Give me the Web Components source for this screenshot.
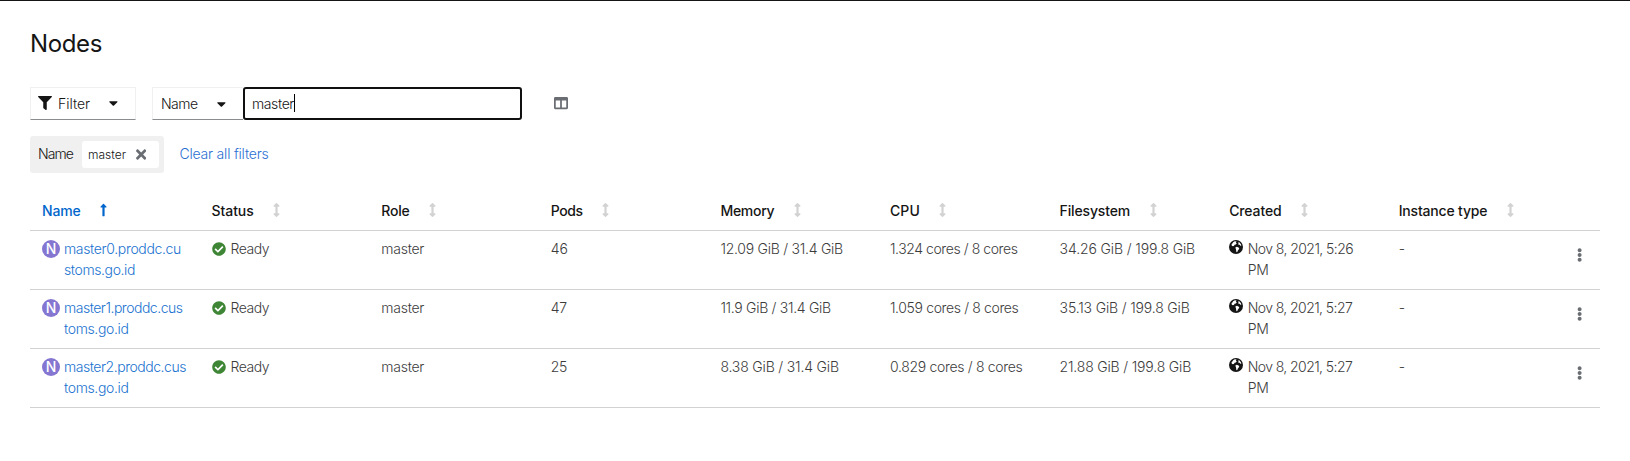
<!DOCTYPE html>
<html lang="en">
<head>
<meta charset="utf-8">
<title>Nodes</title>
<style>
body{margin:0;background:#fff;font:300 14px/21px Inter,"Liberation Sans",sans-serif;color:#151515}
</style>
</head>
<body>
<nodes-page></nodes-page>
<script>
const ICONS={
filter:[512,'M487.976 0H24.028C2.71 0-8.047 25.866 7.058 40.971L192 225.941V432c0 7.831 3.821 15.17 10.237 19.662l80 55.98C298.02 518.69 320 507.493 320 487.98V225.941l184.947-184.97C520.021 25.896 509.338 0 487.976 0z'],
caret:[320,'M31.3 192h257.3c17.8 0 26.7 21.5 14.1 34.1L174.1 354.8c-7.8 7.8-20.5 7.8-28.3 0L17.2 226.1C4.6 213.5 13.5 192 31.3 192z'],
times:[352,'M242.72 256l100.07-100.07c12.28-12.28 12.28-32.19 0-44.48l-22.24-22.24c-12.28-12.28-32.19-12.28-44.48 0L176 189.28 75.93 89.21c-12.28-12.28-32.19-12.28-44.48 0L9.21 111.45c-12.28 12.28-12.28 32.19 0 44.48L109.28 256 9.21 356.07c-12.28 12.28-12.28 32.19 0 44.48l22.24 22.24c12.28 12.28 32.2 12.28 44.48 0L176 322.72l100.07 100.07c12.28 12.28 32.2 12.28 44.48 0l22.24-22.24c12.28-12.28 12.28-32.19 0-44.48L242.72 256z'],
check:[512,'M504 256c0 136.967-111.033 248-248 248S8 392.967 8 256 119.033 8 256 8s248 111.033 248 248zM227.314 387.314l184-184c6.248-6.248 6.248-16.379 0-22.627l-22.627-22.627c-6.248-6.249-16.379-6.249-22.628 0L216 308.118l-70.059-70.059c-6.248-6.248-16.379-6.248-22.628 0l-22.627 22.627c-6.248 6.248-6.248 16.379 0 22.627l104 104c6.249 6.249 16.379 6.249 22.628.001z'],
up:[256,'M88 166.059V468c0 6.627 5.373 12 12 12h56c6.627 0 12-5.373 12-12V166.059h46.059c21.382 0 32.09-25.851 16.971-40.971l-86.059-86.059c-9.373-9.373-24.569-9.373-33.941 0l-86.059 86.059c-15.119 15.119-4.411 40.971 16.971 40.971H88z'],
sort:[256,'M214.059 377.941H168V134.059h46.059c21.382 0 32.09-25.851 16.971-40.971L144.971 7.029c-9.373-9.373-24.568-9.373-33.941 0L24.971 93.088c-15.119 15.119-4.411 40.971 16.971 40.971H88v243.882H41.941c-21.382 0-32.09 25.851-16.971 40.971l86.059 86.059c9.373 9.373 24.568 9.373 33.941 0l86.059-86.059c15.12-15.119 4.412-40.971-16.97-40.971z'],
columns:[512,'M464 32H48C21.49 32 0 53.49 0 80v352c0 26.51 21.49 48 48 48h416c26.51 0 48-21.49 48-48V80c0-26.51-21.49-48-48-48zM224 416H64V160h160v256zm224 0H288V160h160v256z'],
kebab:[192,'M96 184c39.8 0 72 32.2 72 72s-32.2 72-72 72-72-32.2-72-72 32.2-72 72-72zM24 80c0 39.8 32.2 72 72 72s72-32.2 72-72S135.800 8 96 8 24 40.200 24 80zm0 352c0 39.800 32.200 72 72 72s72-32.200 72-72-32.200-72-72-72-72 32.200-72 72z'],
globe:[512,'M256 0a256 256 0 1 0 0 512a256 256 0 1 0 0-512zM150 82l64-34 62 6-26 44 34 22-34 40-46 16-20 36-38 18-44-22-8-60 30-24zM340 66l54 38 46 62 8 52-40-14-22-34-36 6-18-36 24-24zM232 272l56-22 58 20 30 36-26 46-28 34-18 54-32 8-10-62-8-52z']
};
class UiIcon extends HTMLElement{
  connectedCallback(){
    const [w,d]=ICONS[this.getAttribute('name')];
    this.attachShadow({mode:'open'}).innerHTML=`<style>:host{display:block;flex:none}svg{display:block;height:var(--icon-size,14px);width:auto;fill:currentColor}</style><svg viewBox="0 0 ${w} 512"><path fill-rule="evenodd" d="${d}"/></svg>`;
  }
}
customElements.define('ui-icon',UiIcon);

/* A run of text whose tracking is adjusted so that it spans the width given in "w". */
class UiText extends HTMLElement{
  connectedCallback(){
    this.attachShadow({mode:'open'}).innerHTML='<style>:host{display:block;white-space:nowrap;width:max-content;flex:none}</style><slot></slot>';
    const w=+this.getAttribute('w'), n=this.textContent.length;
    if(!w||!n)return;
    const spacing=(w-this.getBoundingClientRect().width)/n;
    this.style.letterSpacing=spacing.toFixed(3)+'px';
  }
}
customElements.define('ui-text',UiText);

class FilterToggle extends HTMLElement{
  constructor(){super();this.attachShadow({mode:'open'}).innerHTML=`<style>
:host{display:flex;align-items:center;box-sizing:border-box;height:33px;padding:0 17px 1px 7px;border:1px solid #f0f0f0;border-bottom-color:#8a8d90;justify-content:space-between}
:host([attached]){border-right:0;padding-left:8px}
:host([attached])>ui-icon{margin-top:2px}
.l{display:flex;align-items:center;gap:6px}
</style><div class="l"><slot></slot></div><ui-icon name="caret"></ui-icon>`}
}
customElements.define('filter-toggle',FilterToggle);

class SearchInput extends HTMLElement{
  constructor(){super();this.attachShadow({mode:'open'}).innerHTML=`<style>
:host{display:flex;align-items:center;box-sizing:border-box;width:279px;height:33px;padding:0 0 1px 7px;border:2px solid #101010;border-radius:3px}
.caret{width:1px;height:18px;background:#000}
</style><slot></slot><span class="caret"></span>`}
}
customElements.define('search-input',SearchInput);

class ChipGroup extends HTMLElement{
  constructor(){super();this.attachShadow({mode:'open'}).innerHTML=`<style>
:host{display:flex;align-items:center;box-sizing:border-box;width:134px;height:37px;padding:0 5px 0 8px;background:#f0f0f0;border-radius:3px;justify-content:space-between}
::slotted([slot=category]){margin-top:-2px}
.chip{display:flex;align-items:center;justify-content:space-between;box-sizing:border-box;width:77px;height:27px;padding:0 13px 0 6px;background:#fff;border-radius:3px;font-size:12px}
ui-icon{color:#6a6e73;--icon-size:15px;margin-top:-1px}
</style><slot name="category"></slot><div class="chip"><slot></slot><ui-icon name="times"></ui-icon></div>`}
}
customElements.define('chip-group',ChipGroup);

class ColumnHead extends HTMLElement{
  connectedCallback(){
    const s=this.hasAttribute('sorted');
    this.attachShadow({mode:'open'}).innerHTML=`<style>
:host{display:flex;align-items:center;gap:19.5px;padding-left:12px;font-weight:500;color:${s?'#06c':'#151515'}}
ui-icon{color:${s?'#06c':'#d2d2d2'};margin-top:-1px}
</style><slot></slot><ui-icon name="${s?'up':'sort'}"></ui-icon>`;
  }
}
customElements.define('column-head',ColumnHead);

const GRID='display:grid;grid-template-columns:repeat(9,169.6px) 1fr;box-sizing:border-box;border-bottom:1px solid #d2d2d2;';
class NodeRow extends HTMLElement{
  constructor(){super();this.attachShadow({mode:'open'}).innerHTML=`<style>
:host{${GRID}height:59px;padding-top:7px;color:#3c3c3c}
.c{padding-left:12px;display:flex;align-items:flex-start}
.badge{width:18px;height:18px;border-radius:50%;background:#8476d1;color:#fff;font-weight:500;line-height:18px;text-align:center;margin:2px 4px 0 0;flex:none}
.link{color:#1a73d0}
.ok{color:#3e8635;margin:4px 5px 0 0}
.gl{color:#151515;margin:2px 4.5px 0 0}
.act{display:flex;justify-content:flex-end;padding-right:18px}
.act ui-icon{color:#6a6e73;margin-top:10px}
</style>
<div class="c"><span class="badge">N</span><div class="link"><slot name="name"></slot></div></div>
<div class="c"><ui-icon class="ok" name="check"></ui-icon><slot name="status"></slot></div>
<div class="c"><slot name="role"></slot></div>
<div class="c"><slot name="pods"></slot></div>
<div class="c"><slot name="memory"></slot></div>
<div class="c"><slot name="cpu"></slot></div>
<div class="c"><slot name="fs"></slot></div>
<div class="c"><ui-icon class="gl" name="globe"></ui-icon><div><slot name="created"></slot></div></div>
<div class="c"><slot name="type"></slot></div>
<div class="act"><ui-icon name="kebab"></ui-icon></div>`}
}
customElements.define('node-row',NodeRow);

const HEADS=[['Name',38.5],['Status',42],['Role',28.5],['Pods',32],['Memory',54],['CPU',30],['Filesystem',70.5],['Created',52.5],['Instance type',88.5]];
const ROWS=[
[['master0.proddc.cu',117],['stoms.go.id',71],['46',17],['12.09 GiB / 31.4 GiB',122.500],['1.324 cores / 8 cores',127.500],['34.26 GiB / 199.8 GiB',135.500],['Nov 8, 2021, 5:26',105.500]],
[['master1.proddc.cus',118.500],['toms.go.id',64.5],['47',16],['11.9 GiB / 31.4 GiB',110.500],['1.059 cores / 8 cores',128.500],['35.13 GiB / 199.8 GiB',130],['Nov 8, 2021, 5:27',104.500]],
[['master2.proddc.cus',122],['toms.go.id',64.5],['25',16],['8.38 GiB / 31.4 GiB',118.500],['0.829 cores / 8 cores',132.500],['21.88 GiB / 199.8 GiB',131.500],['Nov 8, 2021, 5:27',104.500]]];
const t=(slot,[s,w])=>`<ui-text${slot?` slot="${slot}"`:''} w="${w}">${s}</ui-text>`;
class NodesPage extends HTMLElement{
  constructor(){super();this.attachShadow({mode:'open'}).innerHTML=`<style>
:host{display:block;box-sizing:border-box;height:461px;padding:0 30px;border-top:1px solid #151515}
h1{margin:0;padding-top:27px;font-size:24px;line-height:31px;font-weight:400;height:86px;box-sizing:border-box}
.bar{display:flex;align-items:center}
.bar filter-toggle:first-child{width:106px;margin-right:16px}
.bar filter-toggle:nth-child(2){width:91px}
.bar>ui-icon{margin:-1px 0 0 32px;color:#6a6e73}
.chips{display:flex;align-items:center;gap:15.5px;margin-top:16px}
.clear{color:#2b6fd3;margin-top:-2px}
.head{${GRID}height:58px;padding-top:18px}
</style>
<h1><ui-text w="72">Nodes</ui-text></h1>
<div class="bar">
<filter-toggle><ui-icon name="filter"></ui-icon>${t('',['Filter',32])}</filter-toggle>
<filter-toggle attached>${t('',['Name',36.500])}</filter-toggle>
<search-input>${t('',['master',42])}</search-input>
<ui-icon name="columns"></ui-icon>
</div>
<div class="chips"><chip-group>${t('category',['Name',35])}${t('',['master',38])}</chip-group><ui-text class="clear" w="89">Clear all filters</ui-text></div>
<div class="head">${HEADS.map((h,i)=>`<column-head${i?'':' sorted'}>${t('',h)}</column-head>`).join('')}</div>
${ROWS.map(r=>`<node-row>${t('name',r[0])}${t('name',r[1])}${t('status',['Ready',38.5])}${t('role',['master',43])}${t('pods',r[2])}${t('memory',r[3])}${t('cpu',r[4])}${t('fs',r[5])}${t('created',r[6])}${t('created',['PM',21])}${t('type',['-',6])}</node-row>`).join('')}`}
}
customElements.define('nodes-page',NodesPage);
</script>
</body>
</html>
